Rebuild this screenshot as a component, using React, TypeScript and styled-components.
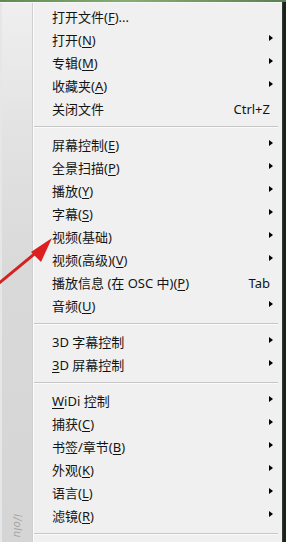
import React from "react";
import styled, { createGlobalStyle } from "styled-components";

const Global = createGlobalStyle`
  html, body { margin: 0; padding: 0; background: #1c261b; }
  #root { width: 286px; height: 542px; }
`;

const Frame = styled.div`
  position: relative;
  width: 286px;
  height: 542px;
  overflow: hidden;
  display: flex;
  flex-direction: column;
  background: #1c261b;
  font-family: "Noto Sans", "Noto Sans CJK SC", sans-serif;
  font-size: 13px;
  color: #141414;
`;

const TopStrip = styled.div`
  height: 2px;
  flex: none;
  background: linear-gradient(90deg, #5f8a52 0%, #86ad74 45%, #5b8050 100%);
`;

const Body = styled.div`
  flex: 1;
  display: flex;
  min-height: 0;
`;

const Menu = styled.div`
  flex: none;
  width: 282px;
  display: flex;
  background: #f0f0f0;
  border-top: 1px solid #f7f7f7;
`;

const RightEdge = styled.div`
  flex: 1;
  background: linear-gradient(90deg, #3a443a 0px, #141c14 2px, #1d2a1e 100%);
`;

const Sidebar = styled.div`
  flex: none;
  width: 33px;
  display: flex;
  flex-direction: column;
  justify-content: flex-end;
  align-items: center;
  padding-bottom: 4px;
  box-sizing: border-box;
  background: linear-gradient(180deg, #efefef 0%, #e2e2e2 25%, #d9d9d9 50%, #d5d5d5 100%);
  border-left: 2px solid #e6e6e6;
  border-right: 1px solid #cfcfcf;
  box-shadow: 1px 0 0 #fbfbfb;
`;

const SideText = styled.div`
  writing-mode: vertical-rl;
  font-family: "DejaVu Sans", sans-serif;
  font-style: italic;
  font-size: 10px;
  color: #a3a3a3;
  letter-spacing: 0.5px;
`;

const List = styled.div`
  flex: 1;
  display: flex;
  flex-direction: column;
  padding-top: 2px;
  padding-left: 1px;
`;

const Row = styled.div`
  height: 23px;
  flex: none;
  display: flex;
  align-items: center;
  padding-left: 18px;
  padding-right: 8px;
  white-space: nowrap;
`;

const Label = styled.span`
  flex: 1;
  line-height: 23px;
  transform: translateY(1px);
`;

const Key = styled.u`
  text-decoration: underline;
  text-underline-offset: 2px;
  text-decoration-thickness: 1px;
`;

const Shortcut = styled.span`
  padding-right: 4px;
  line-height: 23px;
  transform: translateY(1px);
`;

const Arrow = styled.span`
  width: 0;
  height: 0;
  margin-right: 1px;
  border-left: 4px solid #000;
  border-top: 3.5px solid transparent;
  border-bottom: 3.5px solid transparent;
  transform: translateY(-2px);
`;

const Separator = styled.div`
  height: 13px;
  flex: none;
  display: flex;
  align-items: center;
  margin-right: 4px;
  &::before {
    content: "";
    flex: 1;
    height: 1px;
    background: #c6c6c6;
    box-shadow: 0 1px 0 #fafafa;
  }
`;

const Annotation = styled.svg`
  position: absolute;
  left: 0;
  top: 220px;
  width: 60px;
  height: 80px;
  pointer-events: none;
`;

type Item = {
  pre: string;
  key?: string;
  post?: string;
  shortcut?: string;
  sub?: boolean;
};

const groups: Item[][] = [
  [
    { pre: "打开文件(", key: "F", post: ")..." },
    { pre: "打开(", key: "N", post: ")", sub: true },
    { pre: "专辑(", key: "M", post: ")", sub: true },
    { pre: "收藏夹(", key: "A", post: ")", sub: true },
    { pre: "关闭文件", shortcut: "Ctrl+Z" },
  ],
  [
    { pre: "屏幕控制(", key: "E", post: ")", sub: true },
    { pre: "全景扫描(", key: "P", post: ")", sub: true },
    { pre: "播放(", key: "Y", post: ")", sub: true },
    { pre: "字幕(", key: "S", post: ")", sub: true },
    { pre: "视频(基础)", sub: true },
    { pre: "视频(高级)(", key: "V", post: ")", sub: true },
    { pre: "播放信息 (在 OSC 中)(", key: "P", post: ")", shortcut: "Tab" },
    { pre: "音频(", key: "U", post: ")", sub: true },
  ],
  [
    { pre: "3D 字幕控制", sub: true },
    { pre: "", key: "3", post: "D 屏幕控制", sub: true },
  ],
  [
    { pre: "", key: "W", post: "iDi 控制", sub: true },
    { pre: "捕获(", key: "C", post: ")", sub: true },
    { pre: "书签/章节(", key: "B", post: ")", sub: true },
    { pre: "外观(", key: "K", post: ")", sub: true },
    { pre: "语言(", key: "L", post: ")", sub: true },
    { pre: "滤镜(", key: "R", post: ")", sub: true },
  ],
];

export default function App() {
  return (
    <Frame>
      <Global />
      <TopStrip />
      <Body>
        <Menu>
          <Sidebar>
            <SideText>i/olu</SideText>
          </Sidebar>
          <List>
            {groups.map((g, gi) => (
              <React.Fragment key={gi}>
                {g.map((it, i) => (
                  <Row key={i}>
                    <Label>
                      {it.pre}
                      {it.key && <Key>{it.key}</Key>}
                      {it.post}
                    </Label>
                    {it.shortcut && <Shortcut>{it.shortcut}</Shortcut>}
                    {it.sub && <Arrow />}
                  </Row>
                ))}
                <Separator />
              </React.Fragment>
            ))}
          </List>
        </Menu>
        <RightEdge />
      </Body>
      <Annotation viewBox="0 0 60 80">
        <line x1="-2" y1="64" x2="38" y2="31" stroke="#d42222" strokeWidth="3" strokeLinecap="round" />
        <polygon points="52,18 31,32 41,42" fill="#dc1f1f" />
      </Annotation>
    </Frame>
  );
}
